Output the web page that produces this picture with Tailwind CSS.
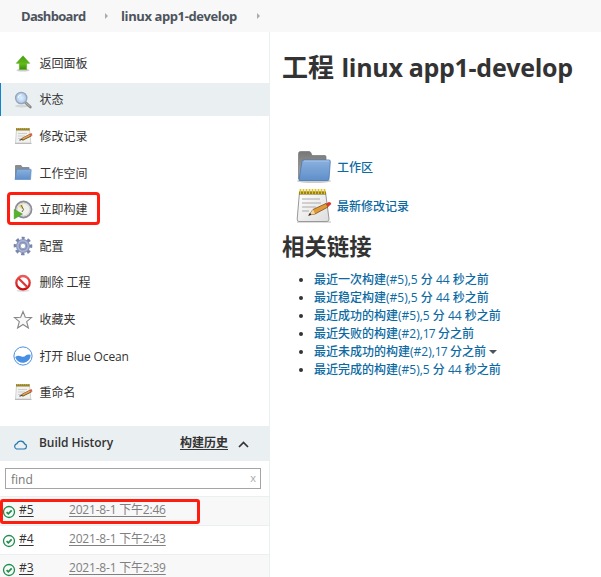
<!DOCTYPE html>
<html lang="zh-CN">
<head>
<meta charset="utf-8">
<title>linux app1-develop</title>
<script src="https://cdn.jsdelivr.net/npm/@tailwindcss/browser@4"></script>
</head>
<body class="w-[601px] h-[577px] overflow-hidden bg-white text-[12px] text-[#333] font-['Open_Sans','Noto_Sans_CJK_SC',sans-serif]">
<svg width="0" height="0" class="absolute">
  <defs>
    <linearGradient id="gfold" x1="0" y1="0" x2="0" y2="1"><stop offset="0" stop-color="#8bb1df"/><stop offset="1" stop-color="#5e8fc9"/></linearGradient>
    <linearGradient id="ggrey" x1="0" y1="0" x2="0" y2="1"><stop offset="0" stop-color="#777"/><stop offset="1" stop-color="#aaa"/></linearGradient>
    <linearGradient id="ggreen" x1="0" y1="0" x2="0" y2="1"><stop offset="0" stop-color="#4a9a12"/><stop offset=".6" stop-color="#5fbd16"/><stop offset="1" stop-color="#398b0c"/></linearGradient>
    <linearGradient id="gpaper" x1="0" y1="0" x2="1" y2="1"><stop offset="0" stop-color="#fff"/><stop offset="1" stop-color="#ddd"/></linearGradient>
    <linearGradient id="gred" x1="0" y1="0" x2="0" y2="1"><stop offset="0" stop-color="#ee5a5a"/><stop offset="1" stop-color="#c80f0f"/></linearGradient>
    <radialGradient id="gglass"><stop offset="0" stop-color="#e2f0fd"/><stop offset="1" stop-color="#a6c8ee"/></radialGradient>
    <symbol id="folder" viewBox="0 0 36 34">
      <ellipse cx="18" cy="31" rx="17" ry="2" fill="#ccc"/>
      <path d="M2.500 29V3.500Q2.500 1.500 4.500 1.500H13Q14.500 1.500 15 3L16 5.500H29Q30 5.500 30 7V29Z" fill="url(#ggrey)" stroke="#777" stroke-width=".7"/>
      <path d="M3 30L6 11.500Q6.200 10 8 10H33Q34.500 10 34.300 11.500L33 29Q33 30.500 31 30.500H4Q3 30.500 3 30Z" fill="url(#gfold)" stroke="#4a78b0" stroke-width=".8"/>
      <path d="M8 11H33" stroke="#a9c5e8"/>
    </symbol>
    <symbol id="note" viewBox="0 0 36 36">
      <path d="M1 33H35V35H1Z" fill="#ddd"/>
      <path d="M3.500 4H29.500L33 31Q33.200 33.500 31 33.500H3Q1 33.500 1.200 31Z" fill="url(#gpaper)" stroke="#999"/>
      <path d="M3 3.500H30V6.500H3Z" fill="#766112"/>
      <path d="M4.500 1V6M7.500 1V6M10.500 1V6M13.500 1V6M16.500 1V6M19.500 1V6M22.500 1V6M25.500 1V6M28.500 1V6" stroke="#dcc32a" stroke-width="1.700"/>
      <path d="M6 11H24M6 15H25M6 19H20M6 23H13" stroke="#aaa"/>
      <path d="M13 27L17 21.500L30 15.500L32 19L19 26Z" fill="#e09b38" stroke="#7d4d15" stroke-width=".8"/>
      <path d="M30 15.500L33 14Q35 14 35.300 16L32 19Z" fill="#d9392b"/>
      <path d="M13 27L17 21.500L19 26Z" fill="#f0d6a5"/><path d="M12 28L14 25L15.500 26.500Z" fill="#222"/>
    </symbol>
    <symbol id="note-sm" viewBox="0 0 20 18">
      <path d="M2.500 2.500H15.500L16.800 16H1.500Z" fill="#f1f1ef" stroke="#c9c9c6" stroke-width=".8"/>
      <path d="M1 16.500H17.500" stroke="#bbb"/>
      <path d="M2 2.300H15.700" stroke="#94812b" stroke-width="2.400"/>
      <path d="M3 1.700H15.500" stroke="#c9b34a" stroke-width="1" stroke-dasharray="1 1"/>
      <path d="M4 6.500H13M4 9H11M4 11.500H7" stroke="#c5c5c5" stroke-width=".8"/>
      <path d="M8 12.500L16.800 8" stroke="#6f4a1c" stroke-width="3"/>
      <path d="M8.500 12L16.500 7.900" stroke="#e3a54b" stroke-width="1.700"/>
      <path d="M16 8.200L18 7.200" stroke="#d65d43" stroke-width="2.600"/>
      <path d="M5.500 13.200L8 12.200" stroke="#444" stroke-width="1.200"/>
    </symbol>
    <symbol id="folder-sm" viewBox="0 0 18 17">
      <path d="M1 15V2Q1 1 2 1H7L8.500 3H14.500Q15.500 3 15.500 4V15Z" fill="#8a8d90"/>
      <path d="M1 15.500L2.600 6Q2.700 5.300 3.500 5.300H16.600Q17.300 5.300 17.200 6L16.500 15.500Z" fill="url(#gfold)" stroke="#5583bb" stroke-width=".6"/>
    </symbol>
    <symbol id="up" viewBox="0 0 20 20"><ellipse cx="10" cy="17.200" rx="6.500" ry="1.400" fill="#ccc"/><path d="M10 2.800L16.700 10.300H13.600V16.500H6.400V10.300H3.300Z" fill="url(#ggreen)" stroke="#65ae2b" stroke-width=".7"/></symbol>
    <symbol id="search" viewBox="0 0 20 20"><ellipse cx="9" cy="16" rx="7" ry="1.500" fill="#d2d6d9"/><path d="M12.500 12.500L17.300 17" stroke="#888" stroke-width="2.800" stroke-linecap="round"/><path d="M12.500 12.500L17 16.500" stroke="#bbb"/><circle cx="8.200" cy="8" r="5.600" fill="url(#gglass)" stroke="#9aa5b7" stroke-width="1.400"/><path d="M5 8Q5.500 5 8.500 4.700" fill="none" stroke="#fff"/></symbol>
    <symbol id="clock" viewBox="0 0 20 20"><circle cx="10.500" cy="9.500" r="8" fill="#f1f1ec" stroke="#8b8d98" stroke-width="1.800"/><circle cx="10.500" cy="9.500" r="6.300" fill="none" stroke="#d5d5d2"/><path d="M10.500 10L9.500 4L5.500 6.500Z" fill="#ead873"/><path d="M8 5L10.500 9.500L9 12" fill="none" stroke="#66624a"/><path d="M1.200 9.500L9.500 14L1.200 19Z" fill="#55b52a" stroke="#3f9218" stroke-width=".5"/></symbol>
    <symbol id="gear" viewBox="0 0 20 20"><circle cx="10" cy="10" r="7.900" fill="none" stroke="#7885ad" stroke-width="2.800" stroke-dasharray="3.300 2.905" stroke-dashoffset="1.650" transform="rotate(-90 10 10)"/><circle cx="10" cy="10" r="4.900" fill="none" stroke="#8592ba" stroke-width="4.200"/><circle cx="10" cy="10" r="5.200" fill="none" stroke="#aeb8d6" stroke-width="1.500"/><circle cx="10" cy="10" r="2.700" fill="#fff" stroke="#7986a9" stroke-width=".7"/></symbol>
    <symbol id="stop" viewBox="0 0 20 20"><ellipse cx="10" cy="17.700" rx="6.500" ry="1.300" fill="#ddd"/><circle cx="10" cy="9.700" r="6.700" fill="#fff" stroke="url(#gred)" stroke-width="2.300"/><path d="M5.500 5.200L14.500 14.200" stroke="#dc3838" stroke-width="2.300"/></symbol>
    <symbol id="star" viewBox="0 0 20 20"><path d="M10 1.500L12.300 7.300L18.500 7.600L13.700 11.600L15.400 18L10 14.500L4.600 18L6.300 11.600L1.500 7.600L7.700 7.300Z" fill="#f8f8f8" stroke="#888" stroke-width="1.100"/></symbol>
    <symbol id="ocean" viewBox="0 0 20 20"><circle cx="10" cy="10" r="9.100" fill="#fff" stroke="#4a90e2"/><path d="M2.200 11Q5 8.700 8 10.300Q10.800 11.700 13 9.300Q14.500 7.900 17.700 8.700A7.900 7.900 0 0 1 2.200 11Z" fill="#4a90e2"/></symbol>
    <symbol id="ok" viewBox="0 0 14 14"><circle cx="7" cy="7" r="5.500" fill="none" stroke="#1e8e4e" stroke-width="1.300"/><path d="M4.600 7.200L6.300 8.900L9.700 5.300" fill="none" stroke="#1e8e4e" stroke-width="1.700"/></symbol>
  </defs>
</svg>

<header class="h-8 bg-[#f8f8f8] flex items-center pl-[21px] text-[13px] font-bold text-[#4d545d] leading-8">
  <span class="w-[84px] whitespace-nowrap tracking-[-0.7px]">Dashboard</span>
  <svg class="w-[3px] h-[6px]" viewBox="0 0 3 6"><path d="M0 0L3 3L0 6Z" fill="#aaa"/></svg>
  <span class="ml-[13px] w-[136px] whitespace-nowrap tracking-[-0.4px]">linux app1-develop</span>
  <svg class="w-[3px] h-[6px]" viewBox="0 0 3 6"><path d="M0 0L3 3L0 6Z" fill="#aaa"/></svg>
</header>

<div class="flex h-[545px]">
  <aside class="w-[270px] shrink-0 border-r border-[#eaeff2]">
    <nav class="pt-[14.400px] h-[394px] flex flex-col gap-[3.600px] [&_span]:pt-[2px]">
      <a class="h-[33px] shrink-0 flex items-center pl-[13px]"><svg class="w-5 h-5 mr-[6.500px]"><use href="#up"/></svg><span>返回面板</span></a>
      <a class="h-[33px] shrink-0 flex items-center pl-[12px] border-l border-[#0b86ce] bg-[#eaeff2] -mr-px"><svg class="w-5 h-5 mr-[6.500px] mt-px"><use href="#search"/></svg><span>状态</span></a>
      <a class="h-[33px] shrink-0 flex items-center pl-[14px]"><svg class="w-5 h-[18px] mr-[5.500px]"><use href="#note-sm"/></svg><span>修改记录</span></a>
      <a class="h-[33px] shrink-0 flex items-center pl-[14px]"><svg class="w-[18px] h-[17px] mr-[7.500px]"><use href="#folder-sm"/></svg><span>工作空间</span></a>
      <a class="relative h-[33px] shrink-0 flex items-center pl-[13px]"><svg class="w-5 h-5 mr-[6.500px] mt-px"><use href="#clock"/></svg><span>立即构建</span><i class="absolute left-[7px] top-[-0.500px] w-[93px] h-[33px] border-[3px] border-[#ff1d0f] rounded-[4px]"></i></a>
      <a class="h-[33px] shrink-0 flex items-center pl-[13px]"><svg class="w-5 h-5 mr-[6.500px]"><use href="#gear"/></svg><span>配置</span></a>
      <a class="h-[33px] shrink-0 flex items-center pl-[13px]"><svg class="w-5 h-5 mr-[6.500px] mt-px"><use href="#stop"/></svg><span>删除 工程</span></a>
      <a class="h-[33px] shrink-0 flex items-center pl-[13px]"><svg class="w-5 h-5 mr-[6.500px] mt-px"><use href="#star"/></svg><span>收藏夹</span></a>
      <a class="h-[33px] shrink-0 flex items-center pl-[13px]"><svg class="w-5 h-5 mr-[6.500px]"><use href="#ocean"/></svg><span class="tracking-[-0.13px]">打开 Blue Ocean</span></a>
      <a class="h-[33px] shrink-0 flex items-center pl-[14px]"><svg class="w-5 h-[18px] mr-[5.500px]"><use href="#note-sm"/></svg><span>重命名</span></a>
    </nav>

    <section>
      <div class="h-[35px] -mr-px bg-[#eaeff2] flex items-center pl-[13px] pr-[21px] font-semibold">
        <svg class="w-[15px] h-[10px] mt-[3px]" viewBox="0 0 15 10" fill="none" stroke="#2077ad" stroke-width="1.200"><path d="M3.500 9H11.300A2.600 2.600 0 0 0 11.500 3.900A4 4 0 0 0 4 3.600A2.800 2.800 0 0 0 3.500 9Z"/></svg>
        <span class="ml-[11px] -mt-px tracking-[-0.05px]">Build History</span>
        <span class="ml-auto -mt-px underline underline-offset-2">构建历史</span>
        <svg class="ml-[10px] mt-[2px] w-[11px] h-[7px]" viewBox="0 0 11 7"><path d="M1 6L5.500 1.500L10 6" fill="none" stroke="#333" stroke-width="1.700"/></svg>
      </div>
      <div class="pt-[7px] pl-[5px] h-[35px]">
        <div class="w-[256px] h-[21px] border border-[#a5a5a5] flex items-center justify-between pl-[5px] pr-[4px] text-[#777]"><span class="pt-[2px]">find</span><span class="text-[11px] text-[#aaa]">x</span></div>
      </div>
      <div class="relative h-[29px] border-t border-[#eaeff2] bg-[#f8f8f8] flex items-center pl-[2px]">
        <svg class="w-[14px] h-[14px] mt-[1px]"><use href="#ok"/></svg><span class="ml-[3px] -mt-[2px] w-[50px] underline underline-offset-2">#5</span><span class="-mt-[2px] tracking-[-0.2px] underline underline-offset-2 text-[#808080]">2021-8-1 下午2:46</span>
        <i class="absolute left-0 top-[2px] w-[200px] h-[25px] border-[3px] border-[#ff1d0f] rounded-[3px]"></i>
      </div>
      <div class="h-[29px] border-t border-[#eaeff2] flex items-center pl-[2px]">
        <svg class="w-[14px] h-[14px] mt-[1px]"><use href="#ok"/></svg><span class="ml-[3px] -mt-[2px] w-[50px] underline underline-offset-2">#4</span><span class="-mt-[2px] tracking-[-0.2px] underline underline-offset-2 text-[#808080]">2021-8-1 下午2:43</span>
      </div>
      <div class="h-[29px] border-t border-[#eaeff2] bg-[#f8f8f8] flex items-center pl-[2px]">
        <svg class="w-[14px] h-[14px] mt-[1px]"><use href="#ok"/></svg><span class="ml-[3px] -mt-[2px] w-[50px] underline underline-offset-2">#3</span><span class="-mt-[2px] tracking-[-0.2px] underline underline-offset-2 text-[#808080]">2021-8-1 下午2:39</span>
      </div>
    </section>
  </aside>

  <main class="pl-[12px] pt-[17px] whitespace-nowrap">
    <h1 class="h-[36px] leading-[36px] text-[26px] font-bold">工程<span class="ml-[7.500px] text-[25px] tracking-[-0.3px]">linux app1-develop</span></h1>
    <div class="mt-[64px] pl-[14px] font-medium text-[#0b6aa2]">
      <a class="flex items-center h-[36px]"><svg class="w-[36px] h-[34px] mr-[5px]"><use href="#folder"/></svg><span class="pt-[2px]">工作区</span></a>
      <a class="flex items-center h-[36px] mt-[3px]"><svg class="w-[36px] h-[36px] mr-[5px]"><use href="#note"/></svg><span class="pt-[2px]">最新修改记录</span></a>
    </div>
    <h2 class="mt-[7px] h-[32px] leading-[32px] text-[22.400px] font-bold">相关链接</h2>
    <ul class="mt-[8px] pl-[32px] list-disc leading-[18px] font-medium [&_a]:text-[#0b6aa2]">
      <li class="h-[18px]"><a>最近一次构建(#5),5 分 44 秒之前</a></li>
      <li class="h-[18px]"><a>最近稳定构建(#5),5 分 44 秒之前</a></li>
      <li class="h-[18px]"><a>最近成功的构建(#5),5 分 44 秒之前</a></li>
      <li class="h-[18px]"><a>最近失败的构建(#2),<span class="tracking-[-0.8px]">17</span> 分之前</a></li>
      <li class="h-[18px]"><a>最近未成功的构建(#2),<span class="tracking-[-0.8px]">17</span> 分之前</a><svg class="inline-block ml-[3px] mb-[2px] w-[8px] h-[4px] align-middle" viewBox="0 0 8 4"><path d="M0 0H8L4 4Z" fill="#4d545d"/></svg></li>
      <li class="h-[18px]"><a>最近完成的构建(#5),5 分 44 秒之前</a></li>
    </ul>
  </main>
</div>
</body>
</html>
